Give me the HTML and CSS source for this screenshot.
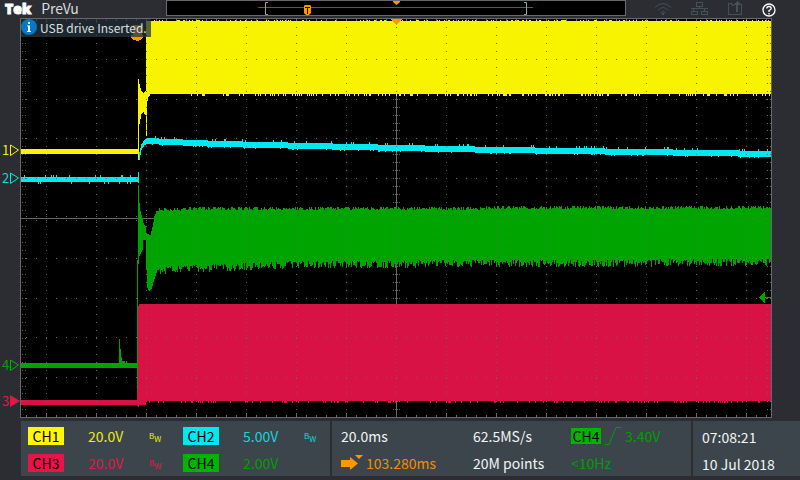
FILE: index.html
```html
<!DOCTYPE html>
<html lang="en">
<head>
<meta charset="utf-8">
<title>Tek PreVu</title>
<link rel="stylesheet" href="styles.css">
</head>
<body>
<header class="topbar">
  <div class="brand"><span class="logo">Tek</span><span class="mode">PreVu</span></div>
  <svg class="record" viewBox="0 0 460 16" role="img" aria-label="Record view">
    <rect class="record-frame" x="0.5" y="0.5" width="459" height="15"/>
    <path class="record-line" d="M92 7.5H367"/>
    <path class="bracket" d="M102 2.5H99.5V14.5H102M358 2.5H360.5V14.5H358"/>
    <path class="orange" d="M139 5H144L145 6V13L143 15H140L138 13V6Z"/>
    <path class="tee" d="M139 7.5H144M141.5 7V14"/>
    <path class="orange" d="M227 1H234V2L230.500 5L227 2Z"/>
  </svg>
  <div class="status">
    <svg class="icon" viewBox="0 0 18 16" role="img" aria-label="Wi-Fi"><path d="M1 6.500Q9 -1.500 17 6.500M4 9.500Q9 3.500 14 9.500M6.500 12Q9 9 11.500 12"/><rect class="dot" x="8" y="12" width="2" height="2"/></svg>
    <svg class="icon crisp" viewBox="0 0 18 16" role="img" aria-label="Network"><path d="M6.500 1.500H12.500V5.500H6.500ZM9.500 5.500V7.500M1 7.500H18M3.500 7.500V10M14.500 7.500V10M1.500 10.500H7.500V13.500H1.500ZM11.500 10.500H17.500V13.500H11.500Z"/></svg>
    <svg class="icon crisp" viewBox="0 0 18 16" role="img" aria-label="Share"><path d="M8 4.500H6.500L5.500 2.500H2.500V13.500H15.500V3.500H14"/><path class="dot" d="M11 0L15 4H12V11H10V4H7Z"/></svg>
    <button class="help" type="button" aria-label="Help"><svg viewBox="0 0 14 14"><circle cx="7" cy="7" r="6"/><path d="M4.800 5.500Q4.800 3.500 7 3.500T9.200 5.400Q9.200 6.500 7 7.500V9M7 10V11.500"/></svg></button>
  </div>
</header>

<main class="scope">
  <svg id="plot" class="plot" viewBox="0 18 800 402" role="img" aria-label="Waveforms">
    <rect class="screen" x="20" y="18" width="752" height="400"/>
    <path class="axis" d="M21 218.500H771M396.500 19V417"/>
    <path id="under" class="gridfill"/>
    <g class="orange"><rect x="133" y="25" width="9" height="13"/><path d="M131 35H143V38L140 40L137 41L134 40L131 38Z"/></g>
    <path id="ch1" class="c1"/>
    <path id="ch2" class="c2"/>
    <path id="ch4" class="c4"/>
    <path id="ch3" class="c3"/>
    <path id="dots" class="gridfill"/>
    <rect class="border" x="20.500" y="18.500" width="751" height="399"/>
    <path class="orange" d="M391 19H402L396.500 25Z"/>
    <path class="c4" d="M759 297.500L765 292V303ZM765 297H771V298H765Z"/>
    <g class="labels">
      <text class="t1" x="2" y="155">1</text><path class="o1" d="M10.500 145L18.500 150L10.500 155.500Z"/>
      <text class="t2" x="2" y="183">2</text><path class="o2" d="M10.500 173L18.500 178L10.500 183.500Z"/>
      <text class="t4" x="2" y="370">4</text><path class="o4" d="M10.500 360L18.500 365L10.500 370.500Z"/>
      <text class="t3" x="2" y="406">3</text><path class="t3" d="M10 395L20 401L10 407Z"/>
    </g>
  </svg>
  <div class="message" role="status">
    <svg class="info" viewBox="0 0 16 16" aria-hidden="true"><circle cx="8" cy="8" r="8"/><path d="M7 3H9V5H7ZM6 6.500H9V12H10V13H6V12H7V7.500H6Z"/></svg>
    <span>USB drive Inserted.</span>
  </div>
</main>

<footer class="readouts">
  <section class="panel channels">
    <span class="chip chip1">CH1</span><span class="t1">20.0V</span><span class="bw t1">B<sub>W</sub></span>
    <span class="chip chip2">CH2</span><span class="t2">5.00V</span><span class="bw t2">B<sub>W</sub></span>
    <span class="chip chip3">CH3</span><span class="t3">20.0V</span><span class="bw t3">B<sub>W</sub></span>
    <span class="chip chip4">CH4</span><span class="t4">2.00V</span><span></span>
  </section>
  <section class="panel timing">
    <span>20.0ms</span><span>62.5MS/s</span>
    <span class="trigger t4"><span class="chip small chip4">CH4</span><svg class="slope" viewBox="0 0 16 18" aria-hidden="true"><path d="M0 17.500H4L11 0.500H16"/></svg><span>3.40V</span></span>
    <span class="delay"><svg class="arrow" viewBox="0 0 22 16" aria-hidden="true"><path d="M0 5H9V2L17 8.500L9 15V12H0ZM14 0H22L18 4Z"/></svg>103.280ms</span><span>20M points</span><span class="t4">&lt;10Hz</span>
  </section>
  <section class="panel clock"><time>07:08:21</time><time>10 Jul 2018</time></section>
</footer>
<script src="plot.js"></script>
</body>
</html>
```
FILE: styles.css
```css
* { box-sizing: border-box; }
body {
  margin: 0;
  background: #2b2d33;
  color: #f2f5f5;
  font: 14px/18px "Noto Sans CJK SC", "Noto Sans", sans-serif;
}
.topbar {
  display: grid;
  grid-template-columns: 166fr 460fr 174fr;
  height: 18px;
}
.brand { display: flex; gap: 10px; padding-left: 5px; }
.logo {
  color: #fff;
  font: 800 14px/17px "Open Sans", sans-serif;
  -webkit-text-stroke: 1px #fff;
}
.mode { color: #d8dcdc; line-height: 17px; }
.record { display: block; width: 100%; }
.record-frame { fill: #000; stroke: #68686c; }
.record-line { fill: none; stroke: #d81b50; }
.bracket { fill: none; stroke: #a0a0a0; }
.tee { fill: none; stroke: #000; }
.orange { fill: #ff9800; }
.status {
  display: flex;
  justify-content: flex-end;
  align-items: flex-start;
  gap: 18px;
  padding: 1px 24px 0 0;
}
.icon { width: 18px; height: 16px; fill: none; stroke: #465055; }
.icon .dot { fill: #465055; stroke: none; }
.crisp { shape-rendering: crispEdges; }
.help { width: 14px; height: 16px; padding: 1px 0 0; border: 0; background: none; }
.help svg { display: block; width: 14px; height: 14px; fill: none; stroke: #fff; stroke-width: 1.3; }

.scope { position: relative; }
.plot { display: block; width: 100%; shape-rendering: crispEdges; }
.screen { fill: #000; }
.axis { stroke: #68686a; }
.border { fill: none; stroke: #68686a; }
.gridfill { fill: #68686a; }
.c1 { fill: #f8f400; }
.c2 { fill: #00e8f0; }
.c3 { fill: #d81244; }
.c4 { fill: #00a400; }
.labels path { shape-rendering: auto; }
.t1 { color: #e8ec20; fill: #e8ec20; }
.t2 { color: #18d4dc; fill: #18d4dc; }
.t3 { color: #e01848; fill: #e01848; }
.t4 { color: #00a000; fill: #00a000; }
.o1 { fill: none; stroke: #f8f400; }
.o2 { fill: none; stroke: #00e8f0; }
.o4 { fill: none; stroke: #00b400; }
.labels text { font-size: 13px; }
.message {
  position: absolute;
  top: 1px;
  left: 21px;
  display: flex;
  gap: 3px;
  height: 18px;
  padding-right: 4px;
  background: rgba(40, 52, 60, 0.75);
  color: #d8e0e0;
  font-size: 12px;
  line-height: 18px;
  white-space: nowrap;
}
.info { width: 16px; height: 16px; fill: #0878c0; }
.info path { fill: #fff; }

.readouts {
  display: grid;
  grid-template-columns: 309fr 359fr 107fr;
  gap: 2px;
  margin: 1px 0 4px 21px;
}
.panel {
  display: grid;
  grid-auto-rows: 27px;
  align-items: center;
  padding-top: 1px;
  height: 55px;
  background: #3b454b;
  white-space: nowrap;
}
.channels {
  grid-template-columns: 60fr 61fr 34fr 60fr 61fr 26fr;
  padding-left: 7px;
}
.timing {
  grid-template-columns: 132fr 98fr 120fr;
  padding-left: 9px;
}
.clock { padding: 2px 0 0 9px; }
.chip {
  width: 36px;
  height: 18px;
  color: #000;
  text-align: center;
}
.small { width: 30px; height: 16px; line-height: 16px; }
.chip1 { background: #fff800; }
.chip2 { background: #00e8f0; }
.chip3 { background: #e81448; }
.chip4 { background: #00b400; }
.bw { display: flex; align-items: center; font-size: 8px; line-height: 12px; }
.bw sub { padding-top: 6px; font-size: 8px; line-height: 12px; }
.trigger, .delay { display: flex; align-items: center; }
.trigger { gap: 4px; }
.slope { width: 16px; height: 18px; fill: none; stroke: #00a000; }
.delay { gap: 3px; color: #f09000; }
.arrow { width: 22px; height: 16px; fill: #ff9800; }
```
FILE: plot.js
```js
// Deterministic noise keeps the traces identical on every load.
let seed = 11;
function rnd() {
  seed = (seed * 1103515245 + 12345) % 2147483648;
  return seed / 2147483648;
}
function put(id, d) { document.getElementById(id).setAttribute('d', d); }
function box(x, y, w, h) { return `M${x} ${y}h${w}v${h}h${-w}z`; }
function column(x, top, bottom) { return box(x, top, 1, bottom - top); }
function interp(points, x) {
  for (let i = 1; i < points.length; i++) {
    const [x0, y0] = points[i - 1], [x1, y1] = points[i];
    if (x <= x1) return Math.round(y0 + (y1 - y0) * (x - x0) / (x1 - x0));
  }
  return points[points.length - 1][1];
}

// Graticule
const rows = [59, 99, 138, 178, 218, 258, 298, 337, 377];
let dots = '', under = '';
for (const y of rows) for (let x = 26; x < 771; x += 10) dots += box(x, y, 1, 1);
for (let k = 1; k < 50; k++) {
  const y = Math.round(18.9 + k * 7.97);
  for (let x = 46; x < 771; x += 50) dots += box(x, y, 1, 1);
  for (const x of [22, 25, 767, 770]) dots += box(x, y, 1, 1);
  for (const x of [393, 395, 397, 399]) under += box(x, y, 1, 1);
}
for (let x = 26; x < 771; x += 10) {
  const long = (x - 46) % 50 === 0;
  under += box(x, 19, 1, long ? 4 : 2);
  dots += box(x, long ? 413 : 415, 1, long ? 4 : 2);
  for (const y of [long ? 214 : 216, 216, 220, long ? 222 : 220]) under += box(x, y, 1, 1);
}
put('dots', dots);
put('under', under);

// Channel 1
let d = box(21, 149, 117, 5) + column(138, 79, 160);
const neckTop = [[139, 84], [141, 91], [143, 93], [145, 91], [146, 90]];
const neckBottom = [[139, 124], [141, 114], [143, 112], [145, 115], [146, 136]];
for (let x = 139; x < 147; x++) d += column(x, interp(neckTop, x), interp(neckBottom, x));
for (let x = 146; x < 771; x++) {
  const edge = x < 150 ? interp([[146, 104], [148, 97], [150, 94]], x) : 94;
  d += column(x, rnd() < 0.2 ? 20 : 21, edge + (x > 190 && rnd() < 0.22 ? 2 : 0));
}
put('ch1', d);

// Channel 2
d = '';
for (let x = 21; x < 138; x++) d += column(x, rnd() < 0.1 ? 175 : 177, rnd() < 0.08 ? 184 : 182);
const rise = [[138, 172], [139, 152], [141, 144], [144, 140], [146, 138]];
const fall = [[138, 183], [139, 160], [141, 150], [144, 145], [146, 144]];
for (let x = 138; x < 146; x++) d += column(x, interp(rise, x), interp(fall, x));
const decay = [[146, 141], [220, 144], [400, 148], [500, 150], [640, 152], [771, 154]];
for (let x = 146; x < 771; x++) {
  const y = interp(decay, x);
  d += column(x, y - 3 - (rnd() < 0.1 ? 2 : 0), y + 3 + (rnd() < 0.1 ? 1 : 0));
}
put('ch2', d);

// Channel 4
d = box(21, 363, 117, 5) + column(119, 339, 366) + column(120, 349, 366) + column(121, 357, 367)
  + box(122, 361, 3, 6) + column(126, 361, 367) + column(137, 260, 401);
const top4 = [[138, 185], [139, 203], [140, 211], [142, 218], [143, 223], [145, 226], [146, 233],
  [150, 235], [152, 227], [154, 216], [156, 211], [160, 210], [200, 209], [771, 208]];
const bottom4 = [[138, 264], [139, 256], [142, 250], [143, 240], [145, 240], [146, 270], [147, 288],
  [149, 291], [151, 289], [154, 279], [157, 270], [200, 268], [300, 264], [771, 262]];
for (let x = 138; x < 771; x++) {
  const jitter = x > 158;
  d += column(x, interp(top4, x) + (jitter ? Math.floor(rnd() * 4) - 2 : 0),
    interp(bottom4, x) + (jitter ? Math.floor(rnd() * 8) - 3 : 0));
}
put('ch4', d);

// Channel 3
d = box(21, 400, 125, 5) + column(137, 390, 406) + column(138, 306, 407);
for (let x = 139; x < 771; x++) d += column(x, 304, 401 + (rnd() < 0.15 ? 2 : 0));
put('ch3', d);
```
